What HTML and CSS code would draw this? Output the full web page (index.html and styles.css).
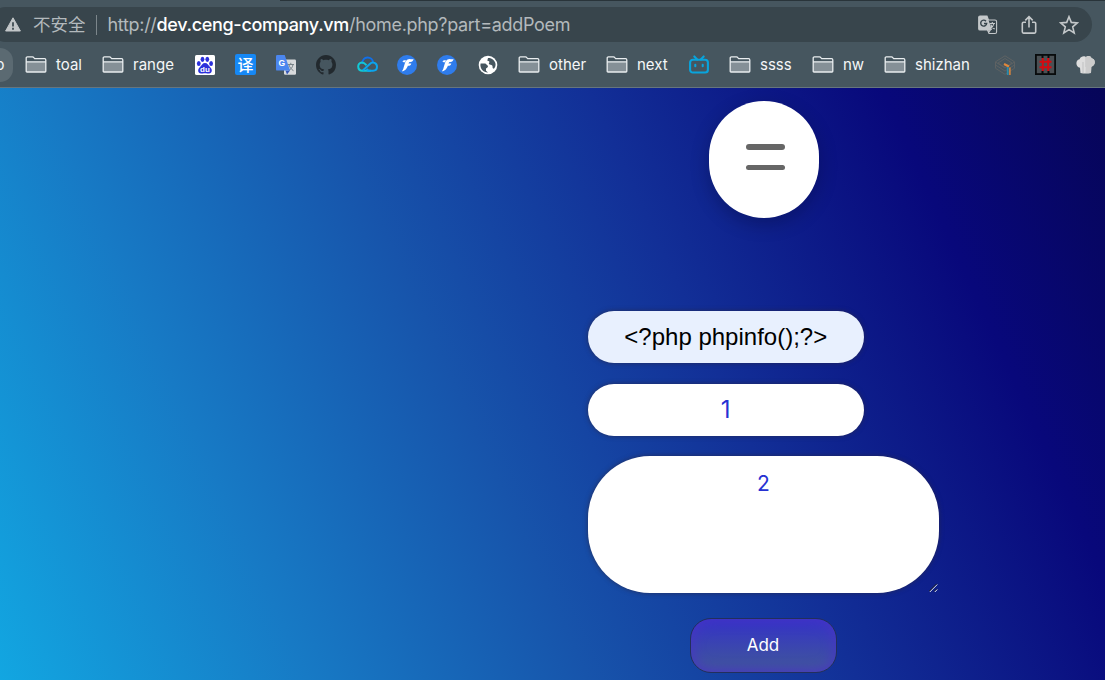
FILE: index.html
```
<!DOCTYPE html>
<html lang="en">
<head>
<meta charset="utf-8">
<title>Add poem</title>
<link rel="stylesheet" href="styles.css">
</head>
<body>
<svg width="0" height="0" class="defs">
  <symbol id="folder" viewBox="0 0 22 20"><path d="M1.2 3.1q0-1.2 1.2-1.2h5.1q.8 0 1.3.7l.9 1.1h9.9q1.2 0 1.2 1.2v11.300q0 .8-.8.8H2q-.8 0-.8-.8z" fill="#46565f"/><path d="M1.200 6.800h19.600v9.400q0 .8-.8.8H2q-.8 0-.8-.8z" fill="#859097"/><path d="M1.200 3.100q0-1.200 1.200-1.200h5.100q.8 0 1.300.7l.9 1.100h9.900q1.200 0 1.200 1.200v11.300q0 .8-.8.8H2q-.8 0-.8-.8zM1.200 6.800h19.600" fill="none" stroke="#e9edef" stroke-width="1.300"/></symbol>
  <symbol id="feather" viewBox="0 0 20 20"><circle cx="10" cy="10" r="10" fill="#2f7cec"/><path d="M4.800 16.300C7.600 14.800 6.600 4.200 12.400 4c1.600 0 2.600.6 4.200 0-.4 2.200-1.800 3-3.400 2.900-1 0-1.500.6-1.700 1.500h2.800c-.3 1.700-1.200 2.400-3.400 2.400C9.400 14 8 16.300 4.800 16.300z" fill="#fff"/><path d="M5.300 6.300C6 5.300 7.500 5 9 5.200L8 7.500c-.8-.3-1.800-.1-2.700-1.200z" fill="#fff"/></symbol>
</svg>
<header class="chrome">
  <div class="tabs"></div>
  <div class="omnibox">
    <svg class="warn" width="16" height="15" viewBox="0 0 16 15"><path d="M8 .8 15.400 14H.6z" fill="#c2c6c8" stroke="#c2c6c8" stroke-linejoin="round"/><path d="M8 5.300v4.300M8 10.800v1.900" stroke="#38454c" stroke-width="1.700"/></svg>
    <span class="unsafe">不安全</span>
    <span class="divider"></span>
    <span class="url">http://<b>dev.ceng-company.vm</b>/home.php?part=addPoem</span>
    <span class="tools">
      <svg width="20" height="20" viewBox="0 0 20 20"><path d="M2 1h7l1.500 4H17q1.600 0 1.600 1.500V17q0 1.500-1.600 1.500h-6L9.500 15H2Q.7 15 .7 13.700V2.300Q.7 1 2 1z" fill="none" stroke="#c4c8ca" stroke-width="1.100"/><path d="M2 1h7l5 14H2Q.7 15 .7 13.700V2.300Q.7 1 2 1z" fill="#c4c8ca"/><path d="M8 6.200A3 3 0 1 0 8.700 8.500H6" fill="none" stroke="#38454c" stroke-width="1.400"/><path d="M11.500 8.500H17M14.300 7v1.500M16 8.500c-.5 2.500-2 4-4 5.200M12.700 9.500c.6 2 2 3.500 4 4.500" fill="none" stroke="#c4c8ca" stroke-width="1.100"/><path d="m9.300 15.300 3.800-.3-2.200 3z" fill="#c4c8ca"/></svg>
      <svg width="20" height="20" viewBox="0 0 20 20"><path d="M7 7.200H4.500q-1.200 0-1.200 1.200v8.400q0 1.300 1.200 1.300h11q1.200 0 1.200-1.300V8.400q0-1.200-1.200-1.200H13M10 12.500V2M6.300 5.400 10 1.700l3.700 3.700" fill="none" stroke="#c4c8ca" stroke-width="1.600"/></svg>
      <svg width="20" height="20" viewBox="0 0 20 20"><path d="m10 1.700 2.300 5.700 6.100.5-4.700 4 1.500 6-5.200-3.300-5.200 3.300 1.500-6-4.700-4 6.100-.5z" fill="none" stroke="#c4c8ca" stroke-width="1.600"/></svg>
    </span>
  </div>
  <nav class="bookmarks">
    <a class="cut"><span>o</span></a>
    <a class="folder"><svg><use href="#folder"/></svg>toal</a>
    <a class="folder"><svg><use href="#folder"/></svg>range</a>
    <a><svg width="20" height="20" viewBox="0 0 20 20"><rect width="20" height="20" rx="1.500" fill="#fff"/><g fill="#2b30dc"><ellipse cx="3.800" cy="8.600" rx="1.900" ry="2.500"/><ellipse cx="7.500" cy="4.300" rx="1.900" ry="2.600"/><ellipse cx="12.300" cy="4.300" rx="1.900" ry="2.600"/><ellipse cx="16.100" cy="8.600" rx="1.900" ry="2.500"/><path d="M10 8c2.500 0 3 2.200 5 4 2.800 2.300 2.300 6.500-1 6.500-1.500 0-2.300-.3-4-.3s-2.500.3-4 .3c-3.300 0-3.800-4.200-1-6.500 2-1.800 2.500-4 5-4z"/></g><text x="10" y="17" text-anchor="middle" class="du">du</text></svg></a>
    <a><span class="yi">译</span></a>
    <a><svg width="20" height="20" viewBox="0 0 20 20"><rect x="8" y="4.500" width="12" height="15.300" rx="1.200" fill="#d8dadc"/><path d="M11.500 9.500H18M14.800 7.800v1.700M17 9.700c-.6 3-2.500 5-4.300 6M13 10c.8 2.500 2.300 4.500 4.500 5.700" stroke="#788388" fill="none"/><path d="m9.500 15.500h4.500l-3 4z" fill="#3456b7"/><path d="M1.200 0h7.500l5.400 15.600H1.200Q0 15.600 0 14.400V1.200Q0 0 1.200 0z" fill="#4b86ef"/><text x="5.900" y="10.700" text-anchor="middle" class="gee">G</text></svg></a>
    <a><svg width="20" height="20" viewBox="0 0 16 16"><path fill="#22292e" d="M8 0C3.580 0 0 3.580 0 8c0 3.540 2.290 6.530 5.470 7.590.4.070.55-.17.55-.38 0-.19-.01-.82-.01-1.490-2.010.37-2.530-.49-2.690-.94-.09-.23-.48-.94-.82-1.130-.28-.15-.68-.52-.01-.53.63-.01 1.080.58 1.230.82.72 1.210 1.870.87 2.330.66.07-.52.28-.87.51-1.070-1.780-.2-3.640-.89-3.640-3.950 0-.87.31-1.590.82-2.150-.08-.2-.36-1.020.08-2.120 0 0 .67-.21 2.200.82.64-.18 1.320-.27 2-.27s1.360.09 2 .27c1.530-1.040 2.200-.82 2.200-.82.44 1.100.16 1.920.08 2.120.51.56.82 1.270.82 2.150 0 3.070-1.870 3.750-3.650 3.950.29.25.54.73.54 1.480 0 1.070-.01 1.930-.01 2.200 0 .21.15.46.55.38A8.010 8.010 0 0 0 16 8c0-4.420-3.580-8-8-8z"/></svg></a>
    <a><svg width="21" height="20" viewBox="0 0 21 20"><path d="M5.200 9C5 0 15.800 1 16 7.500" fill="none" stroke="#126fe8" stroke-width="2"/><path d="M13.800 15.700H5.300C0 15.700-.2 7.500 5 7.500c2 0 2.900 1 4.500 2.700" fill="none" stroke="#12c9d6" stroke-width="2"/><path d="m5.800 15.400 7-6.500c3-2.800 7.200-.8 7.200 2.900 0 2.300-1.600 3.900-4 3.900h-4.700L9.600 14" fill="none" stroke="#0ba5ee" stroke-width="2"/></svg></a>
    <a><svg width="20" height="20"><use href="#feather"/></svg></a>
    <a><svg width="20" height="20"><use href="#feather"/></svg></a>
    <a><svg width="20" height="20" viewBox="0 0 20 20"><circle cx="10" cy="10" r="9.300" fill="#fff"/><path d="M2.600 8.400h4.800l2.200 2.200c.7.700.3 1.800-.5 2.200L8 13.500v2.300l2 1.700c-4.300.2-7.500-3.400-7.600-7.200zM10 3l-.6 2.200c.2 1.300 1.500.7 2 1.500.4.800-1 1.200-.4 2.200.6 1 2.500.3 3.200 1.500.7 1 0 2.600 1 3.200 1.300.6 2.700-2.700 2.300-4.800C16.800 5.200 13.700 2.700 10 3z" fill="#46565f"/></svg></a>
    <a class="folder"><svg><use href="#folder"/></svg>other</a>
    <a class="folder"><svg><use href="#folder"/></svg>next</a>
    <a><svg width="20" height="20" viewBox="0 0 20 20"><g fill="none" stroke="#08a4dd" stroke-width="2.100" stroke-linecap="round"><rect x="1.100" y="4.700" width="17.800" height="12.800" rx="2.800"/><path d="m5.300 1.400 2.900 3M14.700 1.400l-2.900 3M6.300 9.800v1.500M13.700 9.800v1.500"/></g></svg></a>
    <a class="folder"><svg><use href="#folder"/></svg>ssss</a>
    <a class="folder"><svg><use href="#folder"/></svg>nw</a>
    <a class="folder"><svg><use href="#folder"/></svg>shizhan</a>
    <a><svg width="20" height="20" viewBox="0 0 20 20"><path d="m10 .8 9.500 6v6.500L10 19.300.5 13.300V6.800zM.5 7 10 13l9.500-6M.5 10 10 16l9.500-6M10 3.500 3 8l7 4.500L17 8z" fill="none" stroke="#5e6263"/><path d="m9 9 5 2.500" stroke="#df873b" stroke-width="2.200"/><path d="M12.700 12v8" stroke="#278cae" stroke-width="1.800"/><path d="M14.900 12.500V20" stroke="#df873b" stroke-width="1.500"/></svg></a>
    <a><svg width="21" height="21" viewBox="0 0 21 21"><rect x=".9" y=".9" width="19.200" height="19.200" fill="#4a5054" stroke="#080b0c" stroke-width="1.800"/><path d="M7.500 1v3M13.500 1v3M7.500 17v3M13.500 17v3" stroke="#080b0c" stroke-width="2"/><path d="M7.800 4v13M13.200 4v13M4.500 7.800h12M4.500 13.200h12" stroke="#d60a10" stroke-width="2"/></svg></a>
    <a><svg width="20" height="20" viewBox="0 0 20 20"><path d="M4.500 18 4 12.800C-.5 12-.8 5 3.500 4.300 5 .5 9 1 10 2c2-1.700 5-.8 5.500 1.200 4.300.3 4.500 7.300-.2 8.600L15 18q-5 1.200-10.500 0z" fill="#dedede"/><path d="M7 7v11M10 2v10" stroke="#c5c6c7" stroke-width="1.200"/><path d="M10 2c2-1.700 5-.8 5.500 1.200 4.300.3 4.500 7.300-.2 8.600L15 18H9.500z" fill="#ccc"/></svg></a>
  </nav>
</header>
<main class="page">
  <div class="column">
    <button class="menu" aria-label="Menu"><i></i><i></i></button>
    <form class="form">
      <div class="field filled">&lt;?php phpinfo();?&gt;</div>
      <div class="field">1</div>
      <div class="poem">2<svg class="grip" width="10" height="10" viewBox="0 0 10 10"><path d="m.8 9 7.500-7.500M5.800 9l2.500-2.500" stroke="#222" transform="translate(-.7 -.7)"/><path d="m.8 9 7.500-7.500M5.800 9l2.500-2.500" stroke="#dce1ec"/></svg></div>
      <button class="add" type="button">Add</button>
    </form>
  </div>
</main>
</body>
</html>
```
FILE: styles.css
```
* { box-sizing: border-box; }
body { margin: 0; width: 1105px; height: 680px; overflow: hidden; display: flex; flex-direction: column; font-family: Inter, "Noto Sans CJK SC", sans-serif; }
.defs { position: absolute; }
.chrome { flex: none; height: 88px; background: #46565f; border-bottom: 1px solid #66757e; }
.tabs { height: 1px; margin-left: 280px; background: #29343a; }
.omnibox { display: flex; align-items: center; height: 35px; margin: 6px 13px 0 -12px; padding: 0 13px 0 17px; border-radius: 18px; background: #38454c; color: #b3b9bc; font-size: 18px; }
.warn { flex: none; }
.unsafe { margin: -2px 0 0 12px; font: 17.500px "Noto Sans CJK SC", sans-serif; }
.divider { width: 1px; height: 20px; margin: 0 11px 0 10px; background: #7c868b; }
.url { white-space: nowrap; letter-spacing: -.31px; }
.url b { font-weight: 500; color: #fff; }
.tools { display: flex; gap: 20.500px; margin-left: auto; }
.bookmarks { display: grid; grid-template-columns: 25px 77px 93px 40px 41px 40px 41px 40px 40px 41px 40px 88px 83px 40px 83px 72px 111px 40px 41px 29px; height: 45px; align-items: center; color: #f5f6f7; font-size: 15px; }
.bookmarks a { display: flex; align-items: center; white-space: nowrap; }
.bookmarks svg { flex: none; overflow: visible; }
.folder svg { width: 22px; height: 20px; margin-right: 9px; }
.bookmarks .cut { width: 13px; height: 34px; border-radius: 0 17px 17px 0; background: #5b6a72; overflow: hidden; }
.cut span { margin-left: -4.500px; }
.yi { width: 21px; height: 21px; border-radius: 2px; background: #1688f5; color: #fff; font: 500 16px/20px "Noto Sans CJK SC", sans-serif; text-align: center; }
.du { fill: #fff; font: bold 8px "Liberation Sans", sans-serif; }
.gee { fill: #fff; font: bold 8.500px "Liberation Sans", sans-serif; }
.page { flex: 1; padding: 13px 0 0 588px; background: linear-gradient(245.500deg, #060558 0, #08087b 204px, #122f97 470px, #1754ab 715px, #177ac5 970px, #12a6e1 1251px); }
.column { width: 351px; display: flex; flex-direction: column; align-items: center; }
.menu { display: flex; flex-direction: column; align-items: center; justify-content: center; gap: 15px; width: 110px; height: 116.500px; padding: 0 0 4px 3px; border: 0; border-radius: 55px; background: #fff; box-shadow: 0 6px 18px rgba(0, 0, 20, .25); }
.menu i { width: 39px; height: 5.500px; border-radius: 3px; background: #666; }
.form { display: flex; flex-direction: column; width: 351px; margin-top: 93.500px; }
.field { width: 275.500px; height: 52px; margin-bottom: 20.700px; border-radius: 26px; background: #fff; color: #2731d2; font-size: 24px; line-height: 52px; text-align: center; box-shadow: 0 0 5px rgba(40, 40, 70, .75); }
.filled { background: #e8f0fe; color: #000; font-family: "Liberation Sans", sans-serif; }
.poem { position: relative; height: 136.500px; padding-top: 13.500px; border-radius: 62px; background: #fff; color: #2731d2; font-size: 21px; line-height: 27px; text-align: center; box-shadow: 0 0 5px rgba(40, 40, 70, .75); }
.grip { position: absolute; right: 0; bottom: 0; }
.add { align-self: center; width: 147px; height: 55px; margin-top: 25px; padding: 0 1px 1px 0; border: 1px solid #222f5c; border-radius: 21px; background: linear-gradient(#3432c7, #3f52a0 85%, #424fa3); box-shadow: inset 0 0 14px #4a34c5; color: #fff; font: 17px Inter, sans-serif; }
```
